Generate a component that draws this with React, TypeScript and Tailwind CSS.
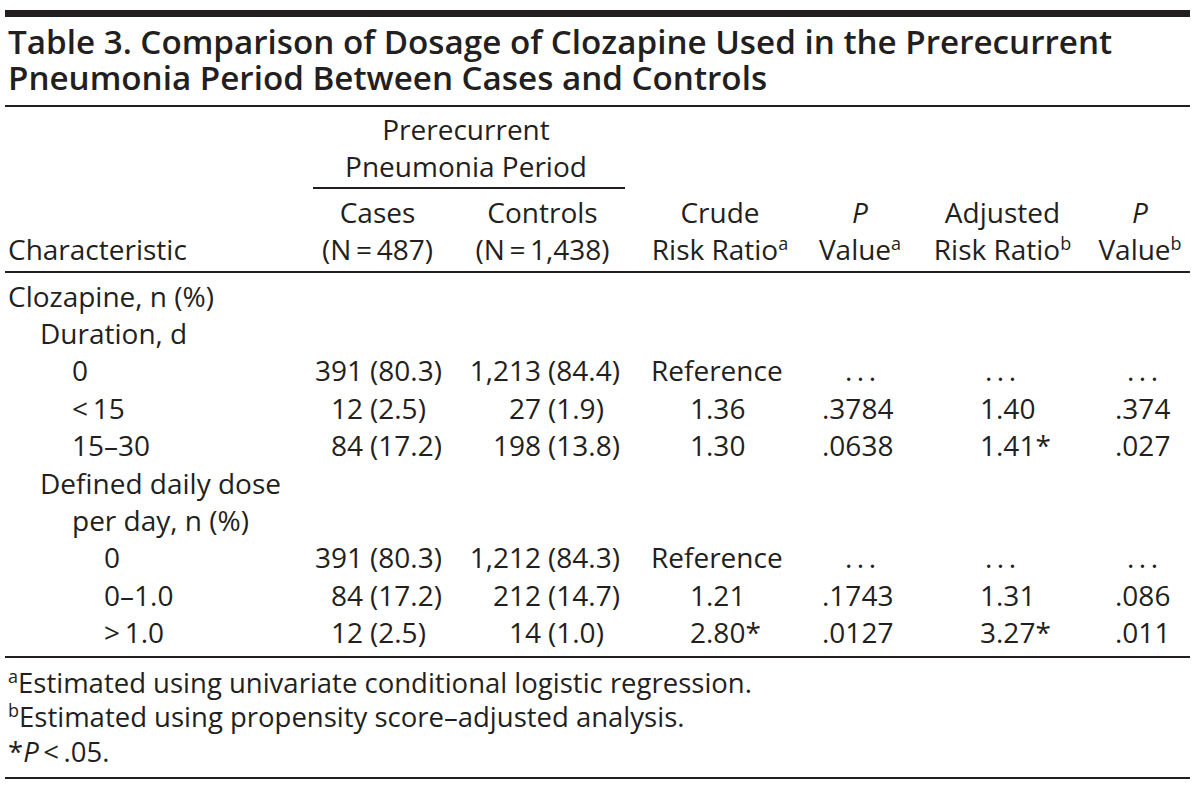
import React from "react";

const GRID = "grid grid-cols-[300px_145px_185px_170px_110px_175px_100px]";

type Row = {
  label: string;
  indent: string;
  vals?: React.ReactNode[];
};

function Par({ n, p, w }: { n: string; p: string; w: string }) {
  return (
    <span className="whitespace-nowrap">
      <span className={`inline-block text-right ${w}`}>{n}</span>
      <span className="ml-[7px]">{p}</span>
    </span>
  );
}

const Ast = () => <span>*</span>;

function c2(n: string, p: string) {
  return <Par n={n} p={p} w="w-[58px]" />;
}
function c3(n: string, p: string) {
  return <Par n={n} p={p} w="w-[91px]" />;
}

const dots = <span className="tracking-[4.5px]">...</span>;

function dataVals(
  a: [string, string],
  b: [string, string],
  crude: string,
  p1: string,
  adj: string,
  p2: string,
  crudeStar = false,
  adjStar = false
): React.ReactNode[] {
  const isRef = crude === "Reference";
  return [
    <div key="a">{c2(a[0], a[1])}</div>,
    <div key="b">{c3(b[0], b[1])}</div>,
    <div key="c" className={isRef ? "pl-[16px]" : "pl-[55px]"}>
      {crude}
      {crudeStar && <Ast />}
    </div>,
    <div key="d" className={isRef ? "pl-[40px]" : "pl-[17px]"}>
      {isRef ? dots : p1}
    </div>,
    <div key="e" className={isRef ? "pl-[70px]" : "pl-[65px]"}>
      {isRef ? dots : adj}
      {adjStar && <Ast />}
    </div>,
    <div key="f" className={isRef ? "pl-[37px]" : "pl-[25px]"}>{isRef ? dots : p2}</div>,
  ];
}

const rows: Row[] = [
  { label: "Clozapine, n (%)", indent: "pl-[3px]" },
  { label: "Duration, d", indent: "pl-[35px]" },
  {
    label: "0",
    indent: "pl-[67px]",
    vals: dataVals(["391", "(80.3)"], ["1,213", "(84.4)"], "Reference", "", "", ""),
  },
  {
    label: "<\u200915",
    indent: "pl-[67px]",
    vals: dataVals(["12", "(2.5)"], ["27", "(1.9)"], "1.36", ".3784", "1.40", ".374"),
  },
  {
    label: "15–30",
    indent: "pl-[67px]",
    vals: dataVals(["84", "(17.2)"], ["198", "(13.8)"], "1.30", ".0638", "1.41", ".027", false, true),
  },
  { label: "Defined daily dose", indent: "pl-[35px]" },
  { label: "per day, n (%)", indent: "pl-[67px]" },
  {
    label: "0",
    indent: "pl-[99px]",
    vals: dataVals(["391", "(80.3)"], ["1,212", "(84.3)"], "Reference", "", "", ""),
  },
  {
    label: "0–1.0",
    indent: "pl-[99px]",
    vals: dataVals(["84", "(17.2)"], ["212", "(14.7)"], "1.21", ".1743", "1.31", ".086"),
  },
  {
    label: ">\u20091.0",
    indent: "pl-[99px]",
    vals: dataVals(["12", "(2.5)"], ["14", "(1.0)"], "2.80", ".0127", "3.27", ".011", true, true),
  },
];

const Sup = ({ c }: { c: string }) => (
  <sup className="text-[18px] top-[-10px]">{c}</sup>
);

export default function App() {
  return (
    <div
      className="w-[1196px] h-[787px] bg-white text-[#231f20] overflow-hidden"
      style={{ fontFamily: '"Open Sans", "Noto Sans", sans-serif' }}
    >
      <div className="ml-[5px] w-[1185px]">
        <div className="mt-[10px] h-[7px] bg-[#231f20]" />
        <div className="pl-[3px] pt-[7px] pb-[10px] text-[33.2px] font-semibold leading-[35.5px] whitespace-nowrap">
          <div>Table 3. Comparison of Dosage of Clozapine Used in the Prerecurrent</div>
          <div>Pneumonia Period Between Cases and Controls</div>
        </div>
        <div className="h-[2px] bg-[#231f20]" />

        <div className="text-[28px] leading-[37.4px]">
          {/* header */}
          <div className={`${GRID} pt-[4px]`}>
            <div className="col-start-2 col-span-2 text-center pr-[8px]">
              <div>Prerecurrent</div>
              <div>Pneumonia Period</div>
            </div>
            <div className="col-start-2 col-span-2 ml-[8px] mr-[10px] mt-[1px] mb-[5px] h-[2px] bg-[#231f20]" />
            <div className="col-start-1 flex items-end pl-[3px]">Characteristic</div>
            <div className="text-center">
              <div>Cases</div>
              <div>(N{"\u2009"}={"\u2009"}487)</div>
            </div>
            <div className="text-center">
              <div>Controls</div>
              <div>(N{"\u2009"}={"\u2009"}1,438)</div>
            </div>
            <div className="text-center">
              <div>Crude</div>
              <div>
                Risk Ratio<Sup c="a" />
              </div>
            </div>
            <div className="text-center">
              <div className="italic">P</div>
              <div>
                Value<Sup c="a" />
              </div>
            </div>
            <div className="text-center">
              <div>Adjusted</div>
              <div>
                Risk Ratio<Sup c="b" />
              </div>
            </div>
            <div className="text-center">
              <div className="italic">P</div>
              <div>
                Value<Sup c="b" />
              </div>
            </div>
          </div>
          <div className="mt-[2px] h-[2px] bg-[#231f20]" />

          {/* body */}
          <div className="pt-[5px] pb-[4px]">
            {rows.map((r, i) => (
              <div key={i} className={GRID}>
                <div className={`${r.indent} whitespace-nowrap`}>{r.label}</div>
                {r.vals ? r.vals : null}
              </div>
            ))}
          </div>
          <div className="h-[2px] bg-[#231f20]" />

          {/* footnotes */}
          <div className="pl-[3px] pt-[8px] pb-[8px] text-[27.5px] leading-[34.5px]">
            <div>
              <Sup c="a" />
              Estimated using univariate conditional logistic regression.
            </div>
            <div>
              <Sup c="b" />
              Estimated using propensity score–adjusted analysis.
            </div>
            <div>
              <span>*</span>
              <span className="italic">P</span>
              {"\u2009<\u2009"}.05.
            </div>
          </div>
          <div className="h-[2px] bg-[#231f20]" />
        </div>
      </div>
    </div>
  );
}
